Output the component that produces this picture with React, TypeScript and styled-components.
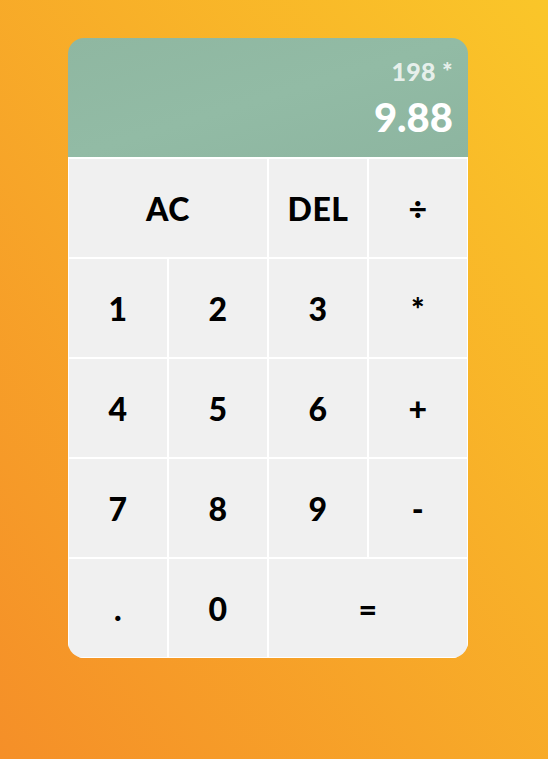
import React from "react";
import styled, { createGlobalStyle } from "styled-components";

const GlobalStyle = createGlobalStyle`
  *, *::before, *::after {
    box-sizing: border-box;
  }
  body {
    margin: 0;
    font-family: Lato, "Liberation Sans", sans-serif;
  }
`;

const Page = styled.div`
  min-height: 100vh;
  padding: 38px 0 0 68px;
  background: linear-gradient(to top right, #f58f28, #fac629);
`;

const Calculator = styled.div`
  display: grid;
  grid-template-columns: repeat(4, 100px);
  grid-template-rows: 120px repeat(5, 100px);
  width: 400px;
  border-radius: 16px;
  overflow: hidden;
`;

const Output = styled.div`
  grid-column: 1 / -1;
  display: flex;
  flex-direction: column;
  align-items: flex-end;
  gap: 7px;
  padding: 19px 15px 0;
  background: linear-gradient(to bottom right, #8fb7a1, #92bba5, #8db5a0);
  border-bottom: 1px solid #ffffff;
  word-break: break-all;
`;

const Previous = styled.div`
  font-size: 25px;
  line-height: 29px;
  font-weight: 900;
  letter-spacing: 0.3px;
  color: rgba(255, 255, 255, 0.8);
`;

const Current = styled.div`
  font-size: 40px;
  line-height: 48px;
  font-weight: 900;
  color: #ffffff;
`;

const Key = styled.button<{ $span?: number }>`
  grid-column: span ${(p) => p.$span ?? 1};
  display: flex;
  align-items: center;
  justify-content: center;
  padding: 0;
  border: 1px solid #ffffff;
  background: #f0f0f0;
  color: #000000;
  font-family: Lato, "Liberation Sans", sans-serif;
  font-size: 32px;
  font-weight: 900;
  letter-spacing: 0.5px;
  cursor: pointer;
  outline: none;
  &:hover {
    background: #e6e6e6;
  }
`;

const keys: { label: string; span?: number }[] = [
  { label: "AC", span: 2 },
  { label: "DEL" },
  { label: "÷" },
  { label: "1" },
  { label: "2" },
  { label: "3" },
  { label: "*" },
  { label: "4" },
  { label: "5" },
  { label: "6" },
  { label: "+" },
  { label: "7" },
  { label: "8" },
  { label: "9" },
  { label: "-" },
  { label: "." },
  { label: "0" },
  { label: "=", span: 2 },
];

const App = () => {
  return (
    <>
      <GlobalStyle />
      <Page>
        <Calculator>
          <Output>
            <Previous>198 *</Previous>
            <Current>9.88</Current>
          </Output>
          {keys.map((k) => (
            <Key key={k.label} $span={k.span}>
              {k.label}
            </Key>
          ))}
        </Calculator>
      </Page>
    </>
  );
};

export default App;
